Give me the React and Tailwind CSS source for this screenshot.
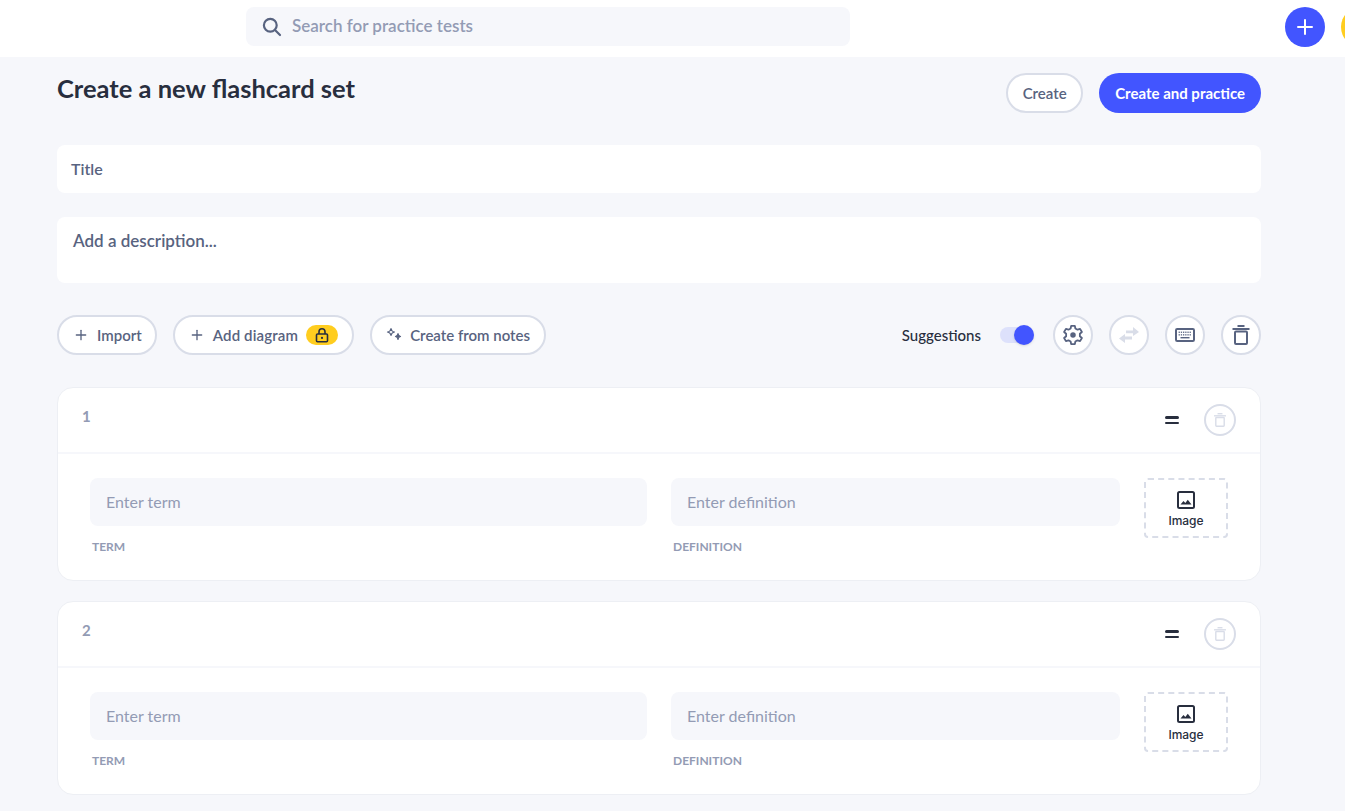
import React from "react";
import { Plus } from "lucide-react";

function PillButton({ children, className = "" }) {
  return (
    <button className={`h-10 rounded-full border-2 border-[#d9dde8] bg-white flex items-center text-[15px] font-semibold text-[#586380] ${className}`}>
      {children}
    </button>
  );
}

function CircleButton({ children }) {
  return (
    <button className="w-10 h-10 rounded-full border-2 border-[#d9dde8] bg-white flex items-center justify-center text-[#586380]">
      {children}
    </button>
  );
}

function SearchIcon() {
  return (
    <svg width="20" height="20" viewBox="0 0 20 20" fill="none" stroke="#586380" strokeWidth="2.2" strokeLinecap="round">
      <circle cx="8.3" cy="8.3" r="6.4" />
      <path d="M13 13 L18 18" />
    </svg>
  );
}

function Sparkles() {
  return (
    <svg width="18" height="18" viewBox="0 0 18 18" fill="none" stroke="currentColor" strokeWidth="1.2" strokeLinejoin="round">
      <path d="M6 2.5 C6.4 5 7 5.6 9.5 6 C7 6.4 6.4 7 6 9.5 C5.6 7 5 6.4 2.5 6 C5 5.6 5.6 5 6 2.5 Z" />
      <path d="M13 7.5 C13.2 9.6 13.6 10 15.5 10.5 C13.6 11 13.2 11.4 13 13.5 C12.8 11.4 12.4 11 10.5 10.5 C12.4 10 12.8 9.6 13 7.5 Z" fill="currentColor" />
    </svg>
  );
}

function LockIcon() {
  return (
    <svg width="14" height="15" viewBox="0 0 14 15" fill="none" stroke="#282e3e" strokeWidth="1.6">
      <rect x="1.5" y="6" width="11" height="7.8" rx="1" />
      <path d="M4 6 V3.8 A3 3 0 0 1 10 3.8 V6" />
      <circle cx="7" cy="9.9" r="1.1" fill="#282e3e" stroke="none" />
    </svg>
  );
}

function GearIcon() {
  return (
    <svg width="22" height="22" viewBox="0 0 24 24" fill="none" stroke="currentColor" strokeWidth="2" strokeLinejoin="round">
      <path d="M10 2.5 H14 L14.6 5.4 L16.9 6.7 L19.7 5.8 L21.7 9.2 L19.5 11.1 V13.9 L21.7 15.8 L19.7 19.2 L16.9 18.3 L14.6 19.6 L14 22.5 H10 L9.4 19.6 L7.1 18.3 L4.3 19.2 L2.3 15.8 L4.5 13.9 V11.1 L2.3 9.2 L4.3 5.8 L7.1 6.7 L9.4 5.4 Z" transform="translate(0 -0.5)" />
      <circle cx="12" cy="12" r="3" fill="currentColor" stroke="none" />
    </svg>
  );
}

function SwapIcon() {
  return (
    <svg width="22" height="20" viewBox="0 0 22 20" fill="#d9dde8">
      <path d="M8 5.5 H15 V2 L21 7 L15 11 V8.3 H8 Z" />
      <path d="M14 11.5 H7 V9 L1 13.5 L7 18 V14.5 H14 Z" />
    </svg>
  );
}

function KeyboardIcon() {
  const keys = [];
  for (let i = 0; i < 6; i++) {
    keys.push(<rect key={`a${i}`} x={3.6 + i * 2.2} y="3.6" width="1.3" height="1.3" />);
    keys.push(<rect key={`b${i}`} x={3.6 + i * 2.2} y="6.2" width="1.3" height="1.3" />);
  }
  return (
    <svg width="20" height="14" viewBox="0 0 20 14" fill="currentColor">
      <rect x="1" y="1" width="18" height="12" rx="1.2" fill="none" stroke="currentColor" strokeWidth="2" />
      {keys}
      <rect x="5.5" y="9" width="9" height="1.4" />
    </svg>
  );
}

function TrashIcon({ size, strokeWidth = 2 }) {
  return (
    <svg width={size} height={size} viewBox="0 0 20 20" fill="none" stroke="currentColor" strokeWidth={strokeWidth}>
      <path d="M1.5 4 H18.5" />
      <path d="M6.5 1 H13.5" />
      <rect x="4" y="6.5" width="12" height="12.5" rx="1" />
    </svg>
  );
}

function ImageIcon() {
  return (
    <svg width="20" height="20" viewBox="0 0 20 20" fill="none">
      <rect x="2" y="2" width="16" height="16" rx="1.5" stroke="#282e3e" strokeWidth="2" />
      <path d="M4.5 14.5 L7.5 11 L9.3 13 L11.8 9.8 L15.5 14.5 Z" fill="#282e3e" />
    </svg>
  );
}

function Card({ n }) {
  return (
    <section className="rounded-2xl border border-[#edeff4] bg-white h-[194px] flex flex-col">
      <div className="h-[66px] border-b-2 border-[#f6f7fb] flex justify-between px-6 shrink-0">
        <span className="pt-[18px] text-[15px] leading-5 font-bold text-[#939bb4]">{n}</span>
        <div className="flex items-center gap-[25px]">
          <div className="flex flex-col gap-[3px]">
            <span className="block w-[14px] h-[2.5px] rounded-full bg-[#282e3e]" />
            <span className="block w-[14px] h-[2.5px] rounded-full bg-[#282e3e]" />
          </div>
          <button className="w-8 h-8 rounded-full border-2 border-[#d9dde8] flex items-center justify-center text-[#d9dde8]">
            <TrashIcon size={14} />
          </button>
        </div>
      </div>
      <div className="flex gap-6 px-8 pt-6">
        <div className="w-[557px] shrink-0">
          <div className="h-12 rounded-lg bg-[#f6f7fb] px-4 flex items-center text-base text-[#939bb4]">Enter term</div>
          <div className="mt-[13px] pl-0.5 text-xs leading-4 font-bold text-[#939bb4]">TERM</div>
        </div>
        <div className="w-[449px] shrink-0">
          <div className="h-12 rounded-lg bg-[#f6f7fb] px-4 flex items-center text-base text-[#939bb4]">Enter definition</div>
          <div className="mt-[13px] pl-0.5 text-xs leading-4 font-bold text-[#939bb4]">DEFINITION</div>
        </div>
        <div className="w-[84px] h-[60px] shrink-0 pt-0.5 rounded border-2 border-dashed border-[#d9dde8] flex flex-col items-center justify-center gap-1">
          <ImageIcon />
          <span className="text-xs leading-[14px] font-['Inter',sans-serif] font-medium text-[#282e3e]">Image</span>
        </div>
      </div>
    </section>
  );
}

export default function App() {
  return (
    <div className="w-[1345px] h-[811px] overflow-hidden bg-[#f6f7fb] font-['Lato',sans-serif]">
      <header className="h-[57px] bg-white flex items-start pt-[7px] overflow-hidden">
        <div className="ml-[246px] w-[604px] h-[39px] shrink-0 rounded-lg bg-[#f6f7fb] flex items-center pl-4 gap-[10px]">
          <SearchIcon />
          <span className="text-[17px] leading-6 -mt-px font-semibold text-[#939bb4]">Search for practice tests</span>
        </div>
        <button className="ml-[435px] w-10 h-10 shrink-0 rounded-full bg-[#4255ff] flex items-center justify-center text-white">
          <Plus size={24} strokeWidth={2} />
        </button>
        <div className="ml-4 w-10 h-10 rounded-full bg-[#ffcd1f] shrink-0" />
      </header>

      <main className="pl-[57px] pr-[84px]">
        <div className="flex justify-between items-start pt-4">
          <h1 className="text-[25.5px] leading-8 -mt-px font-bold text-[#282e3e]">Create a new flashcard set</h1>
          <div className="flex gap-4">
            <PillButton className="px-[14.5px]">Create</PillButton>
            <button className="h-10 px-4 rounded-full bg-[#4255ff] text-white text-[15px] font-bold">Create and practice</button>
          </div>
        </div>

        <div className="mt-8 h-12 rounded-lg bg-white px-[14px] flex items-center text-base font-semibold text-[#586380]">Title</div>
        <div className="mt-6 h-[66px] rounded-lg bg-white px-4 pt-3 text-[17px] leading-6 font-semibold text-[#586380]">Add a description...</div>

        <div className="mt-8 flex items-center justify-between">
          <div className="flex gap-4">
            <PillButton className="pl-[14px] pr-[13px] gap-2"><Plus size={16} />Import</PillButton>
            <PillButton className="px-[14px] gap-2">
              <Plus size={16} />
              <span className="tracking-[0.01em]">Add diagram</span>
              <span className="w-8 h-5 rounded-full bg-[#ffcd1f] flex items-center justify-center">
                <LockIcon />
              </span>
            </PillButton>
            <PillButton className="pl-[13px] pr-[14px] gap-[7px]"><Sparkles />Create from notes</PillButton>
          </div>
          <div className="flex items-center gap-4">
            <span className="text-[15px] font-medium text-[#282e3e] mr-[3px]">Suggestions</span>
            <div className="relative w-[34px] h-4 rounded-full bg-[#dde1fb] mr-[3px]">
              <span className="absolute right-0 -top-[2px] w-5 h-5 rounded-full bg-[#4255ff] shadow" />
            </div>
            <CircleButton><GearIcon /></CircleButton>
            <CircleButton><SwapIcon /></CircleButton>
            <CircleButton><KeyboardIcon /></CircleButton>
            <CircleButton><TrashIcon size={20} /></CircleButton>
          </div>
        </div>

        <div className="mt-8 flex flex-col gap-5">
          <Card n={1} />
          <Card n={2} />
        </div>
      </main>
    </div>
  );
}
